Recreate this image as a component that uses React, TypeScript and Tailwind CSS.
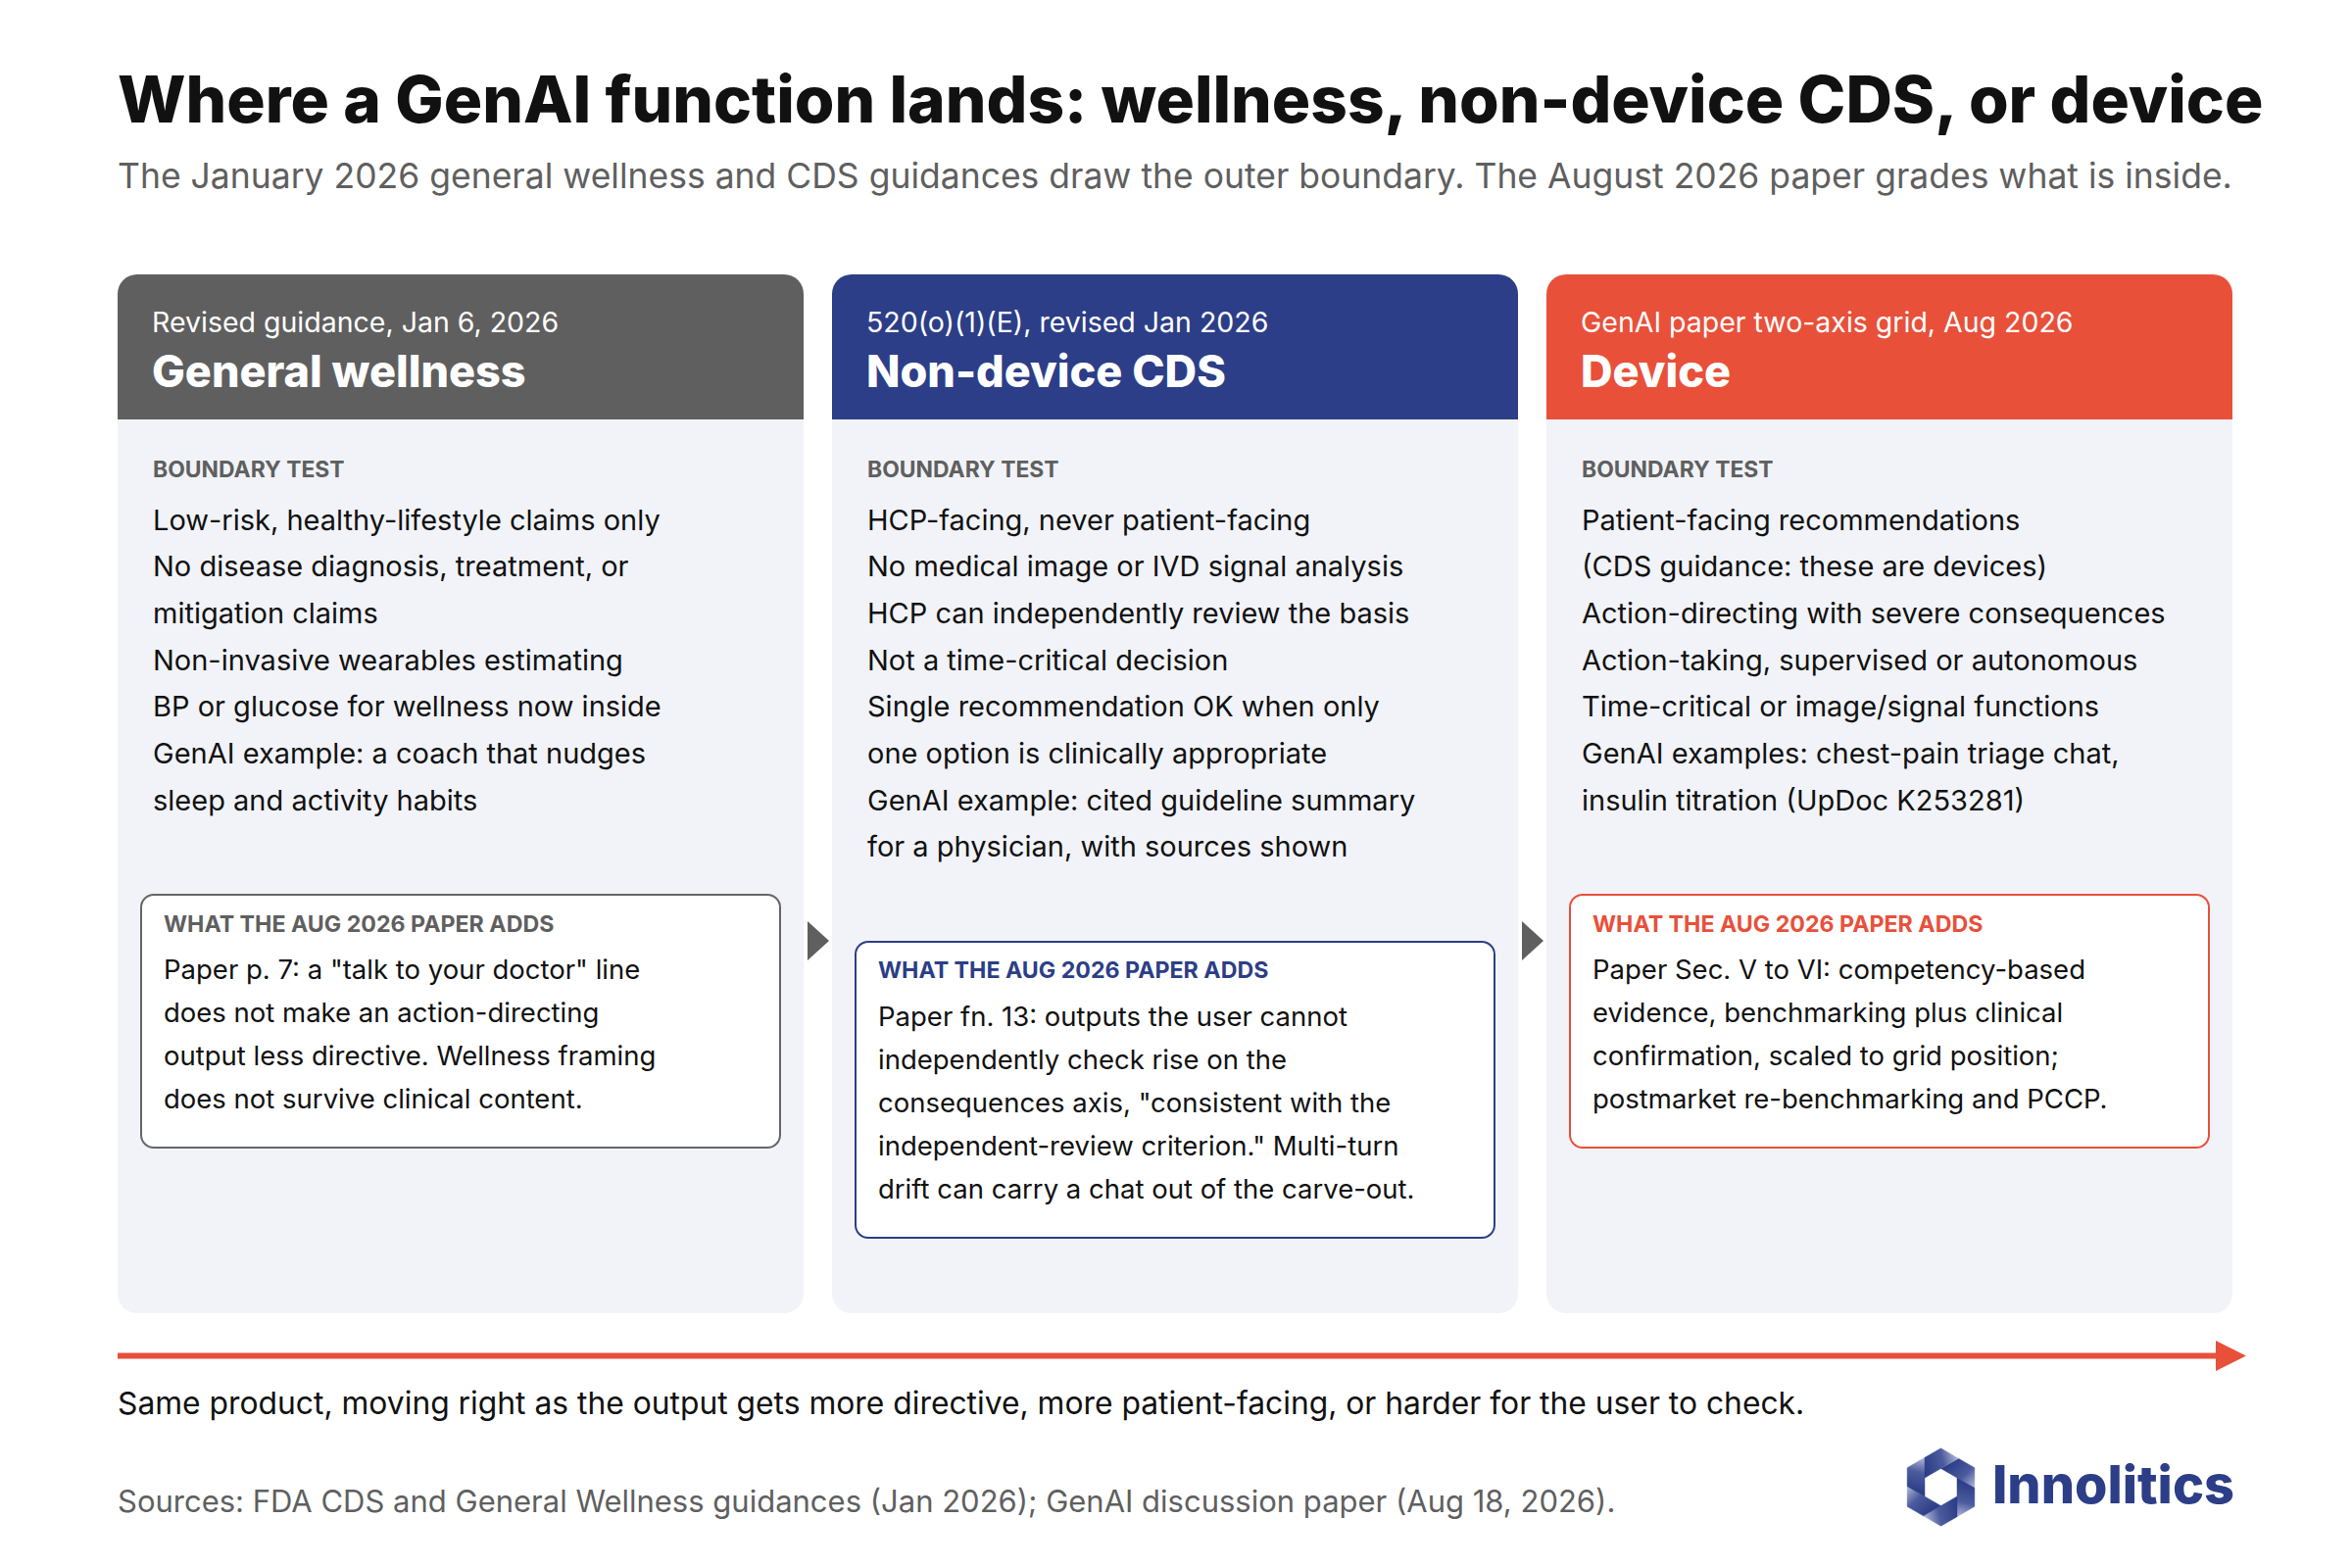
import React from "react";

type Column = {
  tag: string;
  title: string;
  headerBg: string;
  label: string;
  border: string;
  lines: string[];
  adds: string[];
};

const columns: Column[] = [
  {
    tag: "Revised guidance, Jan 6, 2026",
    title: "General wellness",
    headerBg: "bg-[#5f5f5f]",
    label: "text-[#5f5f5f]",
    border: "border-[#666666]",
    lines: [
      "Low-risk, healthy-lifestyle claims only",
      "No disease diagnosis, treatment, or",
      "mitigation claims",
      "Non-invasive wearables estimating",
      "BP or glucose for wellness now inside",
      "GenAI example: a coach that nudges",
      "sleep and activity habits",
    ],
    adds: [
      'Paper p. 7: a "talk to your doctor" line',
      "does not make an action-directing",
      "output less directive. Wellness framing",
      "does not survive clinical content.",
    ],
  },
  {
    tag: "520(o)(1)(E), revised Jan 2026",
    title: "Non-device CDS",
    headerBg: "bg-[#2c3e87]",
    label: "text-[#2c3e87]",
    border: "border-[#2c3e87]",
    lines: [
      "HCP-facing, never patient-facing",
      "No medical image or IVD signal analysis",
      "HCP can independently review the basis",
      "Not a time-critical decision",
      "Single recommendation OK when only",
      "one option is clinically appropriate",
      "GenAI example: cited guideline summary",
      "for a physician, with sources shown",
    ],
    adds: [
      "Paper fn. 13: outputs the user cannot",
      "independently check rise on the",
      'consequences axis, "consistent with the',
      'independent-review criterion." Multi-turn',
      "drift can carry a chat out of the carve-out.",
    ],
  },
  {
    tag: "GenAI paper two-axis grid, Aug 2026",
    title: "Device",
    headerBg: "bg-[#e8503a]",
    label: "text-[#e8503a]",
    border: "border-[#e8503a]",
    lines: [
      "Patient-facing recommendations",
      "(CDS guidance: these are devices)",
      "Action-directing with severe consequences",
      "Action-taking, supervised or autonomous",
      "Time-critical or image/signal functions",
      "GenAI examples: chest-pain triage chat,",
      "insulin titration (UpDoc K253281)",
    ],
    adds: [
      "Paper Sec. V to VI: competency-based",
      "evidence, benchmarking plus clinical",
      "confirmation, scaled to grid position;",
      "postmarket re-benchmarking and PCCP.",
    ],
  },
];

// shutter-style hexagon mark: six blades cut by extending the inner hexagon's edges
const Logo: React.FC = () => {
  const R = 50;
  const r = 24;
  const pt = (rad: number, deg: number) => [rad * Math.cos((deg * Math.PI) / 180), rad * Math.sin((deg * Math.PI) / 180)];
  const outer = [0, 1, 2, 3, 4, 5].map((j) => pt(R, -90 + 60 * j));
  const inner = [0, 1, 2, 3, 4, 5].map((k) => pt(r, -90 + 60 * k));
  const cross = (a: number[], b: number[]) => a[0] * b[1] - a[1] * b[0];
  const hit = (p: number[], d: number[]) => {
    let best = { t: Infinity, e: 0, q: [0, 0] };
    for (let e = 0; e < 6; e++) {
      const a = outer[e];
      const b = outer[(e + 1) % 6];
      const ba = [b[0] - a[0], b[1] - a[1]];
      const ap = [a[0] - p[0], a[1] - p[1]];
      const den = cross(d, ba);
      if (Math.abs(den) < 1e-9) continue;
      const t = cross(ap, ba) / den;
      const s = cross(ap, d) / den;
      if (t > 1e-6 && s >= -1e-6 && s <= 1 + 1e-6 && t < best.t) best = { t, e, q: [p[0] + t * d[0], p[1] + t * d[1]] };
    }
    return best;
  };
  const rays = inner.map((ik, k) => {
    const prev = inner[(k + 5) % 6];
    return hit(ik, [ik[0] - prev[0], ik[1] - prev[1]]);
  });
  const blades = inner.map((ik, k) => {
    const a = rays[k];
    const b = rays[(k + 1) % 6];
    const pts: number[][] = [ik, a.q];
    let e = a.e;
    while (e !== b.e) {
      e = (e + 1) % 6;
      pts.push(outer[e]);
    }
    pts.push(b.q);
    const mid = [(ik[0] + a.q[0]) / 2, (ik[1] + a.q[1]) / 2];
    return { d: "M" + pts.map((p) => `${p[0].toFixed(2)},${p[1].toFixed(2)}`).join("L") + "Z", from: mid, to: b.q };
  });
  return (
    <svg width="73" height="83" viewBox="-46 -52 92 104">
      <defs>
        {blades.map((b, i) => (
          <linearGradient key={i} id={`blade${i}`} gradientUnits="userSpaceOnUse" x1={b.from[0]} y1={b.from[1]} x2={b.to[0]} y2={b.to[1]}>
            <stop offset="0" stopColor="#2c3e87" />
            <stop offset="0.55" stopColor="#4c5b9e" />
            <stop offset="1" stopColor="#b3bad8" />
          </linearGradient>
        ))}
      </defs>
      {blades.map((b, i) => (
        <path key={i} d={b.d} fill={`url(#blade${i})`} stroke={`url(#blade${i})`} strokeWidth="0.6" strokeLinejoin="round" />
      ))}
    </svg>
  );
};

const Card: React.FC<{ col: Column }> = ({ col }) => (
  <div className="flex h-[1060px] w-[700px] shrink-0 flex-col overflow-hidden rounded-[20px] bg-[#f1f3f8]">
    <div className={`h-[148px] shrink-0 px-[35px] text-white ${col.headerBg}`}>
      <div className="pt-[35.4px] text-[28.5px] leading-[28.5px]">{col.tag}</div>
      <div className="mt-[12.2px] text-[45px] font-extrabold leading-[45px]">{col.title}</div>
    </div>
    <div className="px-[36px] pt-[40.2px]">
      <div className="text-[22.9px] font-bold leading-[23px] text-[#5f5f5f]">BOUNDARY TEST</div>
      <div className="mt-[15.4px] text-[29px] leading-[47.7px] text-[#111111]">
        {col.lines.map((l) => (
          <div key={l}>{l}</div>
        ))}
      </div>
    </div>
    <div className={`mx-[23px] mt-[71.5px] rounded-[14px] border-[2.5px] bg-white pb-[27px] pl-[22px] pt-[17.6px] ${col.border}`}>
      <div className={`text-[23.2px] font-bold leading-[23px] ${col.label}`}>WHAT THE AUG 2026 PAPER ADDS</div>
      <div className="mt-[12.9px] text-[27.5px] leading-[44px] text-[#111111]">
        {col.adds.map((l) => (
          <div key={l}>{l}</div>
        ))}
      </div>
    </div>
  </div>
);

const Connector: React.FC = () => (
  <div className="flex w-[29px] shrink-0 justify-center pt-[660px]">
    <svg width="22" height="40" viewBox="0 0 22 40">
      <polygon points="0,0 22,20 0,40" fill="#5f5f5f" />
    </svg>
  </div>
);

export default function App() {
  return (
    <div className="relative h-[1600px] w-[2400px] overflow-hidden bg-white pl-[120px] [font-family:Inter,sans-serif]">
      <h1 className="pt-[68px] text-[65.7px] font-extrabold leading-[66px] text-[#111111]">
        Where a GenAI function lands: wellness, non-device CDS, or device
      </h1>
      <p className="mt-[28.3px] text-[35.5px] leading-[35.5px] text-[#5f5f5f]">
        The January 2026 general wellness and CDS guidances draw the outer boundary. The August 2026 paper grades what is inside.
      </p>

      <div className="mt-[82.2px] flex">
        <Card col={columns[0]} />
        <Connector />
        <Card col={columns[1]} />
        <Connector />
        <Card col={columns[2]} />
      </div>

      <svg className="mt-[28px] block" width="2172" height="31" viewBox="0 0 2172 31">
        <rect x="0" y="12.5" width="2142" height="6" fill="#e8503a" />
        <polygon points="2141,0 2172,15.5 2141,31" fill="#e8503a" />
      </svg>

      <p className="mt-[17.4px] text-[31.8px] leading-[32px] text-[#111111]">
        Same product, moving right as the output gets more directive, more patient-facing, or harder for the user to check.
      </p>

      <div className="mt-[27.5px] flex w-[2160px] items-start justify-between">
        <p className="mt-[40.2px] text-[31px] leading-[31px] text-[#5f5f5f]">
          Sources: FDA CDS and General Wellness guidances (Jan 2026); GenAI discussion paper (Aug 18, 2026).
        </p>
        <div className="flex items-start gap-[16px]">
          <Logo />
          <span className="mt-[12.4px] text-[54px] font-extrabold leading-[54px] text-[#2c3e87]">Innolitics</span>
        </div>
      </div>
    </div>
  );
}
